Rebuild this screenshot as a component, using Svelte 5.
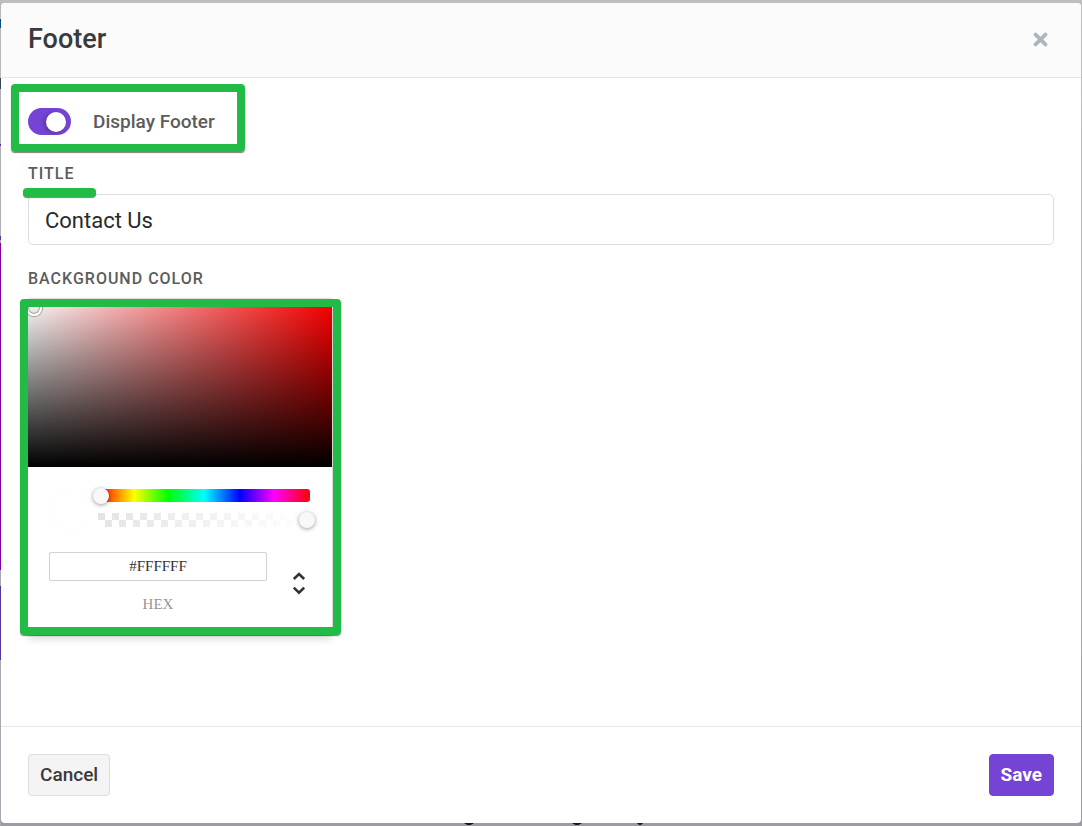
<script lang="ts">
	let displayFooter = $state(true);
	let title = $state('Contact Us');
	let hex = $state('#FFFFFF');
	let hue = $state(0);
	let alpha = $state(100);
</script>

<div class="backdrop">
	<div class="modal" role="dialog" aria-modal="true" aria-labelledby="modal-title">
		<header class="modal__header">
			<h1 id="modal-title">Footer</h1>
			<button type="button" class="close" aria-label="Close">
				<svg width="15" height="15" viewBox="0 0 14 14">
					<path d="M2.4 2.4 L11.6 11.6 M11.6 2.4 L2.4 11.6" />
				</svg>
			</button>
		</header>

		<div class="modal__body">
			<div class="toggle">
				<input id="display-footer" type="checkbox" role="switch" bind:checked={displayFooter} />
				<label for="display-footer">Display Footer</label>
				<span class="mark mark--toggle"></span>
			</div>

			<div class="field field--title">
				<label class="field__label" for="title">Title</label>
				<input id="title" class="field__input" type="text" bind:value={title} />
				<span class="mark-line"></span>
			</div>

			<div class="field">
				<span class="field__label" id="color-label">Background Color</span>
				<div class="picker" role="group" aria-labelledby="color-label">
					<div
						class="picker__saturation"
						style="background-color: hsl({hue}, 100%, 50%)"
					>
						<span class="picker__pointer"></span>
					</div>
					<div class="picker__controls">
						<div class="picker__row">
							<div class="picker__swatch" style="background: {hex}"></div>
							<div class="picker__sliders">
								<div class="slider slider--hue">
									<input type="range" min="0" max="360" aria-label="Hue" bind:value={hue} />
								</div>
								<div class="slider slider--alpha">
									<input type="range" min="0" max="100" aria-label="Alpha" bind:value={alpha} />
								</div>
							</div>
						</div>
						<div class="picker__row picker__row--hex">
							<div class="hex">
								<input id="hex" type="text" spellcheck="false" bind:value={hex} />
								<label for="hex">hex</label>
							</div>
							<button type="button" class="picker__switch" aria-label="Change color format">
								<svg width="14" height="26" viewBox="0 0 14 26">
									<path d="M1.8 9 L7 4 L12.2 9 M1.8 17.6 L7 22.6 L12.2 17.6" />
								</svg>
							</button>
						</div>
					</div>
					<span class="mark mark--picker"></span>
				</div>
			</div>
		</div>

		<footer class="modal__footer">
			<button type="button" class="btn">Cancel</button>
			<button type="button" class="btn btn--primary">Save</button>
		</footer>
	</div>
</div>

<style>
	:global(body) {
		margin: 0;
	}

	.backdrop,
	.backdrop * {
		box-sizing: border-box;
	}

	.backdrop {
		display: flex;
		min-height: 100vh;
		padding: 3px 1px;
		font-family: Roboto, 'Liberation Sans', sans-serif;
		/* dimmed page showing round the dialog */
		background:
			radial-gradient(ellipse 5px 2px at 469px 823px, #16161c 80%, transparent) no-repeat,
			radial-gradient(ellipse 5px 2px at 577px 823px, #16161c 80%, transparent) no-repeat,
			radial-gradient(ellipse 3px 2px at 640px 823px, #16161c 80%, transparent) no-repeat,
			linear-gradient(
					#b8b8bb 19px,
					#0b4d8c 19px 28px,
					#b8b8bb 28px 78px,
					#3c4250 78px 89px,
					#b0afb8 89px 144px,
					#5a2fa0 144px 146px,
					#b0afb8 146px 236px,
					#5533a0 236px 240px,
					#a8a8ae 240px 243px,
					#84069c 243px 570px,
					#a8a8ae 570px 586px,
					#53349f 586px 660px,
					#a8a8ae 660px
				)
				left / 1px 100% no-repeat,
			linear-gradient(#bfbfbf, #b2b2b4 50%, #9d9ca5);
	}

	.modal {
		display: flex;
		flex: 1;
		flex-direction: column;
		background: #fff;
		border-radius: 4px;
		overflow: hidden;
	}

	.modal__header {
		display: flex;
		align-items: center;
		justify-content: space-between;
		height: 75px;
		padding: 0 27px 2px;
		background: #fbfbfb;
		border-bottom: 1px solid #e7e7ea;
	}

	h1 {
		margin: 0;
		font-size: 27px;
		font-weight: 500;
		line-height: 32px;
		color: #3a3a3a;
	}

	button {
		font-family: inherit;
		cursor: pointer;
	}

	.close {
		display: flex;
		padding: 6px;
		border: 0;
		background: none;
	}

	.close path {
		fill: none;
		stroke: #adb5bd;
		stroke-width: 3.6;
		stroke-linecap: round;
	}

	.modal__body {
		flex: 1;
		padding: 30px 27px;
	}

	.toggle {
		position: relative;
		display: inline-flex;
		align-items: center;
		gap: 22px;
		height: 27px;
		vertical-align: top;
	}

	.toggle input {
		display: flex;
		align-items: center;
		width: 43px;
		height: 27px;
		margin: 0;
		padding: 0 5px;
		appearance: none;
		background: #c8c8cc;
		border-radius: 14px;
	}

	.toggle input::before {
		content: '';
		width: 20px;
		height: 20px;
		background: #fff;
		border-radius: 50%;
		box-shadow: -2px 1px 4px rgba(0, 0, 0, 0.25);
	}

	.toggle input:checked {
		justify-content: flex-end;
		background: #7644d5;
	}

	.toggle label {
		font-size: 19px;
		font-weight: 500;
		color: #5c5c5c;
	}

	.field {
		position: relative;
		margin-top: 24px;
	}

	.field--title {
		margin-top: 29px;
	}

	.field__label {
		display: block;
		margin-bottom: 10px;
		font-size: 16px;
		font-weight: 500;
		line-height: 20px;
		letter-spacing: 1px;
		text-transform: uppercase;
		color: #5c5c5c;
	}

	.field__input {
		display: block;
		width: 100%;
		height: 51px;
		padding: 2px 16px 0;
		font-family: inherit;
		font-size: 22px;
		color: #2a2a2a;
		background: #fff;
		border: 1px solid #dcdce4;
		border-radius: 5px;
	}

	/* annotation marks */
	.mark {
		position: absolute;
		border: 8px solid #22bb45;
		border-radius: 4px;
		box-shadow: 0 1px 1px rgba(0, 0, 0, 0.5);
		pointer-events: none;
	}

	.mark--toggle {
		inset: -24px -30px -17px -17px;
	}

	.mark--picker {
		inset: 0 -9px 0 -8px;
	}

	.mark-line {
		position: absolute;
		top: 24px;
		left: -5px;
		width: 73px;
		height: 9px;
		background: #22bb45;
		border-radius: 4px;
		box-shadow: 0 1px 1px rgba(0, 0, 0, 0.5);
	}

	.picker {
		position: relative;
		width: 304px;
		background: #fff;
		box-shadow:
			0 0 2px rgba(0, 0, 0, 0.3),
			0 4px 8px rgba(0, 0, 0, 0.15);
	}

	.picker__saturation {
		position: relative;
		height: 168px;
		overflow: hidden;
		background-image: linear-gradient(to top, #000, transparent),
			linear-gradient(to right, #fff, transparent);
	}

	.picker__pointer {
		position: absolute;
		top: 1px;
		left: -2px;
		width: 16px;
		height: 16px;
		border: 2px solid #fff;
		border-radius: 50%;
		box-shadow:
			0 0 1px 1px rgba(0, 0, 0, 0.35),
			inset 0 0 1px 1px rgba(0, 0, 0, 0.35);
	}

	.picker__controls {
		padding: 22px;
		padding-left: 21px;
	}

	.picker__row {
		display: flex;
		gap: 8px;
	}

	.picker__swatch {
		width: 41px;
		height: 41px;
		border-radius: 50%;
		box-shadow: inset 0 0 0 1px rgba(0, 0, 0, 0.01);
	}

	.picker__sliders {
		display: flex;
		flex: 1;
		flex-direction: column;
		gap: 11px;
	}

	.slider {
		display: flex;
		height: 13px;
	}

	.slider--hue {
		background: linear-gradient(
			to right,
			#f00,
			#ff0 17%,
			#0f0 33%,
			#0ff 50%,
			#00f 67%,
			#f0f 83%,
			#f00
		);
		border-radius: 3px;
	}

	.slider--alpha {
		height: 14px;
		background:
			linear-gradient(to right, transparent, #fff),
			repeating-conic-gradient(#fff 0 25%, #e4e4e4 0 50%) 0 0 / 14px 14px;
	}

	.slider input {
		flex: 1;
		min-width: 0;
		height: 100%;
		margin: 0 -5px;
		appearance: none;
		background: none;
	}

	.slider input::-webkit-slider-thumb {
		width: 16px;
		height: 16px;
		appearance: none;
		background: #f8f8f8;
		border-radius: 50%;
		box-shadow: 0 1px 4px rgba(0, 0, 0, 0.4);
	}

	.picker__row--hex {
		align-items: center;
		justify-content: space-between;
		margin-top: 22px;
		font-family: 'Liberation Serif', serif;
	}

	.hex {
		flex: 1;
		max-width: 218px;
		text-align: center;
	}

	.hex input {
		display: block;
		width: 100%;
		height: 29px;
		padding: 0;
		font-family: inherit;
		font-size: 15px;
		text-align: center;
		color: #333;
		background: #fff;
		border: 1px solid #d2d2d2;
		border-radius: 2px;
	}

	.hex label {
		display: block;
		margin-top: 14px;
		font-size: 15px;
		line-height: 18px;
		text-transform: uppercase;
		color: #969696;
	}

	.picker__switch {
		display: flex;
		padding: 4px;
		border: 0;
		background: none;
	}

	.picker__switch path {
		fill: none;
		stroke: #333;
		stroke-width: 2.6;
	}

	.modal__footer {
		display: flex;
		justify-content: space-between;
		padding: 27px;
		border-top: 1px solid #e7e7ea;
	}

	.btn {
		height: 42px;
		padding: 0 11px 2px;
		font-size: 19px;
		font-weight: 500;
		color: #3a3a3a;
		background: #f4f4f4;
		border: 1px solid #dcdce4;
		border-radius: 4px;
	}

	.btn--primary {
		font-weight: 700;
		color: #fff;
		background: #7644d5;
		border-color: #7644d5;
	}
</style>
